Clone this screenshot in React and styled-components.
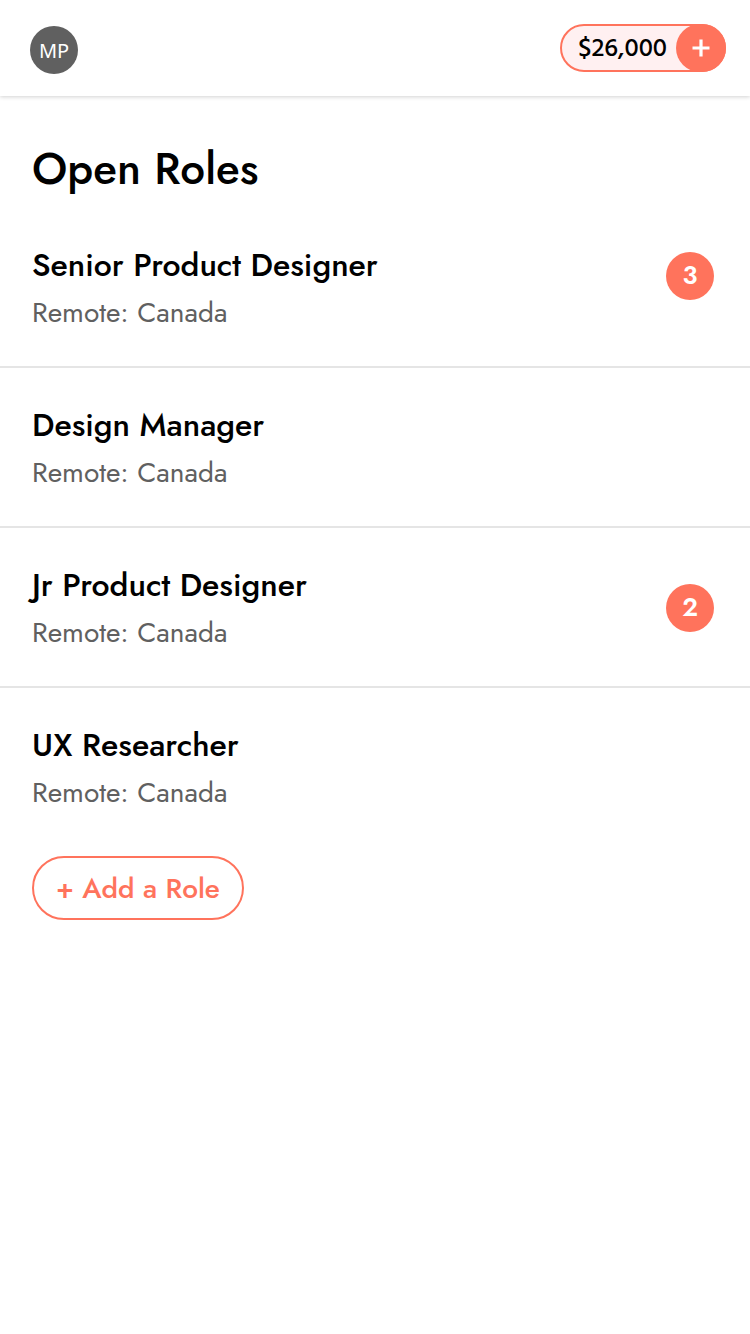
import React from 'react'
import styled, { createGlobalStyle, ThemeProvider } from 'styled-components'

const theme = {
  accent: '#ff735c',
  accentTint: '#fff0f1',
  text: '#000',
  muted: '#606060',
  line: '#e5e5e5',
}

const GlobalStyle = createGlobalStyle`
  * {
    box-sizing: border-box;
  }
  body {
    margin: 0;
    background: #fff;
    color: ${({ theme }) => theme.text};
    font-family: Jost, Lato, 'Open Sans', sans-serif;
  }
  button {
    font: inherit;
    cursor: pointer;
  }
`

const Header = styled.header`
  display: flex;
  align-items: flex-end;
  justify-content: space-between;
  min-height: 96px;
  padding: 24px 24px 22px 30px;
  box-shadow: 0 1px 4px rgba(0, 0, 0, 0.18);
`

const Avatar = styled.button`
  width: 48px;
  height: 48px;
  padding: 0;
  border: 0;
  border-radius: 50%;
  background: ${({ theme }) => theme.muted};
  color: #fff;
  font-family: 'Noto Sans', sans-serif;
  font-size: 20px;
`

const Balance = styled.div`
  display: flex;
  align-items: center;
  align-self: flex-start;
  height: 48px;
  border: 2px solid ${({ theme }) => theme.accent};
  border-radius: 24px;
  background: ${({ theme }) => theme.accentTint};
`

const Amount = styled.span`
  padding: 4px 9px 0 16px;
  font-family: Hind, Lato, sans-serif;
  font-size: 26px;
  font-weight: 500;
  line-height: 44px;
`

const TopUp = styled.button`
  display: flex;
  align-items: center;
  justify-content: center;
  width: 50px;
  height: 48px;
  margin-right: -2px;
  padding: 0;
  border: 0;
  border-radius: 24px;
  background: ${({ theme }) => theme.accent};
  color: #fff;
`

const Heading = styled.h1`
  margin: 0;
  padding: 40px 32px 6px;
  font-size: 44px;
  font-weight: 500;
  line-height: 66px;
`

const Roles = styled.ul`
  margin: 0;
  padding: 0;
  list-style: none;
`

const Role = styled.li`
  display: flex;
  align-items: center;
  justify-content: space-between;
  padding: 35px 36px 33px 32px;

  & + & {
    border-top: 2px solid ${({ theme }) => theme.line};
  }
`

const Title = styled.h2`
  margin: 0 0 6px;
  font-size: 32px;
  font-weight: 500;
  line-height: 44px;
`

const Location = styled.p`
  margin: 0;
  color: ${({ theme }) => theme.muted};
  font-size: 28px;
  line-height: 40px;
`

const Badge = styled.span`
  align-self: ${({ $top }) => ($top ? 'flex-start' : 'center')};
  width: 48px;
  height: 48px;
  margin: 9px 0;
  border-radius: 50%;
  background: ${({ theme }) => theme.accent};
  color: #fff;
  font-size: 25px;
  font-weight: 600;
  line-height: 46px;
  text-align: center;
`

const AddRole = styled.button`
  height: 64px;
  margin: 10px 32px;
  padding: 0 22px;
  border: 2px solid ${({ theme }) => theme.accent};
  border-radius: 32px;
  background: #fff;
  color: ${({ theme }) => theme.accent};
  font-size: 28px;
  font-weight: 500;
`

const PlusIcon = () => (
  <svg width="18" height="18" viewBox="0 0 18 18" aria-hidden="true">
    <path d="M9 .5v17M.5 9h17" stroke="currentColor" strokeWidth="3.2" />
  </svg>
)

const roles = [
  { id: 1, title: 'Senior Product Designer', location: 'Remote: Canada', count: 3, top: true },
  { id: 2, title: 'Design Manager', location: 'Remote: Canada' },
  { id: 3, title: 'Jr Product Designer', location: 'Remote: Canada', count: 2 },
  { id: 4, title: 'UX Researcher', location: 'Remote: Canada' },
]

export default () => (
  <ThemeProvider theme={theme}>
    <GlobalStyle />
    <Header>
      <Avatar>MP</Avatar>
      <Balance>
        <Amount>$26,000</Amount>
        <TopUp aria-label="Add funds"><PlusIcon /></TopUp>
      </Balance>
    </Header>
    <main>
      <Heading>Open Roles</Heading>
      <Roles>
        {roles.map(({ id, title, location, count, top }) => (
          <Role key={id}>
            <div>
              <Title>{title}</Title>
              <Location>{location}</Location>
            </div>
            {count && <Badge $top={top}>{count}</Badge>}
          </Role>
        ))}
      </Roles>
      <AddRole>+ Add a Role</AddRole>
    </main>
  </ThemeProvider>
)
